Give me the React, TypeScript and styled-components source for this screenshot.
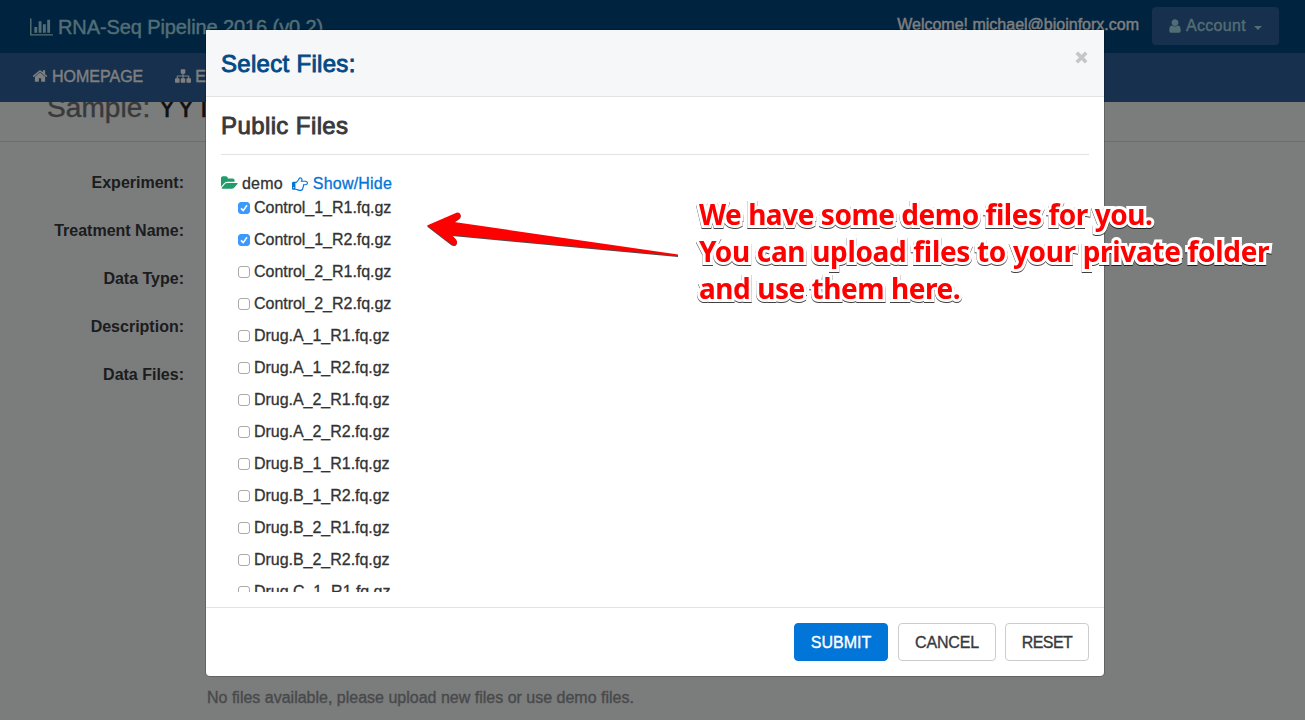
import React from "react";
import styled, { createGlobalStyle } from "styled-components";

const GlobalStyle = createGlobalStyle`
  * { box-sizing: border-box; }
  html, body { margin: 0; height: 100%; overflow: hidden; }
  body {
    background: #f7f8f9;
    color: #373a3c;
    font: 16px/24px "Liberation Sans", Arial, sans-serif;
  }
`;

const Page = styled.div`
  position: relative;
  width: 1305px;
  height: 720px;
  overflow: hidden;
  display: flex;
  flex-direction: column;
`;

const TopBar = styled.header`
  height: 53px;
  flex: none;
  display: flex;
  align-items: center;
  background: #00467e;
  padding: 0 26px 0 30px;
`;

const Brand = styled.div`
  display: flex;
  align-items: center;
  gap: 5px;
  flex: 1;
  color: #a5dce8;
  font-size: 20px;
  letter-spacing: -0.1px;
  -webkit-text-stroke: 0.4px;
  white-space: nowrap;
`;

const Welcome = styled.span`
  color: #fff;
  margin: -4px 13px 0 0;
  -webkit-text-stroke: 0.35px;
`;

const AccountButton = styled.button`
  width: 127px;
  height: 38px;
  margin-bottom: 1px;
  display: flex;
  align-items: center;
  border: 0;
  border-radius: 4px;
  background: #2c609b;
  color: #a5dce8;
  font: inherit;
  letter-spacing: 0.3px;
  padding: 0 17px;
  gap: 5px;
  -webkit-text-stroke: 0.35px;
`;

const Caret = styled.i`
  border: 4px solid transparent;
  border-top-color: currentColor;
  border-bottom: 0;
  margin: 3px 0 0 3px;
`;

const NavBar = styled.nav`
  height: 49px;
  flex: none;
  display: flex;
  align-items: center;
  gap: 32px;
  padding: 0 0 2px 32px;
  background: #2c609b;
  color: #fff;
`;

const NavItem = styled.a`
  display: flex;
  align-items: center;
  gap: 4px;
  -webkit-text-stroke: 0.35px;
  svg { margin-top: -2px; }
`;

const TitleStrip = styled.div`
  height: 40px;
  flex: none;
  overflow: hidden;
  border-bottom: 1px solid #d9dadb;
  padding-left: 47px;
`;

const SampleTitle = styled.h1`
  margin: -11px 0 0;
  font-size: 28px;
  line-height: 34px;
  font-weight: 400;
  letter-spacing: 0.1px;
  color: #6f7376;
  -webkit-text-stroke: 0.4px;
  b { color: #222; font-weight: 400; }
`;

const Details = styled.dl`
  margin: 29px 0 0;
  width: 184px;
  flex: none;
  display: flex;
  flex-direction: column;
  gap: 24px;
`;

const Label = styled.dt`
  text-align: right;
  font-weight: 700;
  white-space: nowrap;
`;

const EmptyNote = styled.p`
  margin: auto 0 10px 207px;
  width: max-content;
  color: #909396;
  -webkit-text-stroke: 0.35px;
`;

const Backdrop = styled.div`
  position: absolute;
  inset: 0;
  background: rgba(0, 0, 0, 0.5);
  display: flex;
  align-items: flex-start;
  padding: 30px 0 0 206px;
`;

const Dialog = styled.section`
  width: 898px;
  height: 646px;
  display: flex;
  flex-direction: column;
  background: #fff;
  border-radius: 0 0 4px 4px;
  box-shadow: 0 0 0 1px rgba(0, 0, 0, 0.2);
`;

const DialogHeader = styled.header`
  height: 67px;
  flex: none;
  display: flex;
  justify-content: space-between;
  align-items: center;
  padding: 0 16px 0 15px;
  background: #f5f7f9;
  border-bottom: 1px solid #e2e3e4;
`;

const DialogTitle = styled.h4`
  margin: 0;
  padding-top: 2px;
  font-size: 24px;
  font-weight: 400;
  letter-spacing: 0.3px;
  color: #034985;
  -webkit-text-stroke: 0.9px;
`;

const CloseIcon = styled.svg`
  margin-bottom: 11px;
  stroke: #c4c6c7;
  stroke-width: 3.6;
`;

const DialogBody = styled.div`
  flex: 1;
  min-height: 0;
  padding: 14px 15px 15px;
  display: flex;
  flex-direction: column;
`;

const SectionTitle = styled.h4`
  margin: 0 0 14px;
  padding-bottom: 13px;
  border-bottom: 1px solid #e2e3e4;
  font-size: 24px;
  line-height: 30px;
  font-weight: 400;
  letter-spacing: 0.4px;
  -webkit-text-stroke: 0.9px;
`;

const FolderRow = styled.div`
  display: flex;
  align-items: center;
  height: 25px;
  padding-top: 5px;
  letter-spacing: 0.2px;
  color: #333;
  -webkit-text-stroke: 0.3px;
  svg { margin: -2px 4px 0 0; }
`;

const Toggle = styled.a`
  display: flex;
  align-items: center;
  margin-left: 9px;
  color: #0275d8;
  svg { margin-right: 5px; }
`;

const FileList = styled.ul`
  list-style: none;
  margin: 0;
  padding: 2px 0 0 17px;
  flex: 1;
  min-height: 0;
  overflow: hidden;
`;

const FileRow = styled.li`
  height: 32px;
  display: flex;
  align-items: flex-start;
  gap: 4px;
  line-height: 24px;
  letter-spacing: -0.03px;
  color: #333;
  -webkit-text-stroke: 0.3px;
`;

const Box = styled.span<{ $on: boolean }>`
  width: 12px;
  height: 12px;
  margin-top: 6px;
  border-radius: 3px;
  border: 1px solid ${(p) => (p.$on ? "#3b99fc" : "#a9a9a9")};
  background: ${(p) => (p.$on ? "#3b99fc" : "#fff")};
  display: flex;
  align-items: center;
  justify-content: center;
`;

const DialogFooter = styled.footer`
  height: 69px;
  flex: none;
  display: flex;
  justify-content: flex-end;
  align-items: center;
  padding: 0 15px;
  border-top: 1px solid #e2e3e4;
`;

const Button = styled.button<{ $w: number; $ls?: number; $gap?: number; $primary?: boolean }>`
  width: ${(p) => p.$w}px;
  height: 38px;
  margin-left: ${(p) => p.$gap ?? 0}px;
  padding: 2px 0 0;
  font: inherit;
  letter-spacing: ${(p) => p.$ls ?? 0}px;
  border-radius: 4px;
  border: 1px solid ${(p) => (p.$primary ? "#0275d8" : "#ccc")};
  background: ${(p) => (p.$primary ? "#0275d8" : "#fff")};
  color: ${(p) => (p.$primary ? "#fff" : "#373a3c")};
  -webkit-text-stroke: 0.35px;
`;

const Annotation = styled.p`
  position: absolute;
  left: 699px;
  top: 196px;
  margin: 0;
  font: 700 28px/37px "Noto Sans", "Open Sans", sans-serif;
  color: #f00;
  white-space: nowrap;
  -webkit-text-stroke: 6px #fff;
  paint-order: stroke fill;
  filter: drop-shadow(0 1px 0.7px rgba(0, 0, 0, 0.75));
`;

const Line = styled.span<{ $ls: number }>`
  display: block;
  letter-spacing: ${(p) => p.$ls}px;
`;

const Arrow = styled.svg`
  position: absolute;
  left: 420px;
  top: 205px;
  filter: drop-shadow(0 1px 0.6px rgba(0, 0, 0, 0.7));
`;

const glyphs = {
  chart: {
    box: "0 0 2048 1792",
    d: "M640 896v512h-256v-512h256zm384-512v1024h-256v-1024h256zm1024 1152v128h-2048v-1536h128v1408h1920zm-640-896v768h-256v-768h256zm384-384v1152h-256v-1152h256z",
  },
  home: {
    box: "64 0 1664 1792",
    d: "M1472 992v480q0 26-19 45t-45 19h-384v-384h-256v384h-384q-26 0-45-19t-19-45v-480q0-1 .5-3t.5-3l575-474 575 474q1 2 1 6zm223-69l-62 74q-8 9-21 11h-3q-13 0-21-7l-692-577-692 577q-12 8-24 7-13-2-21-11l-62-74q-8-10-7-23.5t11-21.5l719-599q32-26 76-26t76 26l244 204v-195q0-14 9-23t23-9h192q14 0 23 9t9 23v408l219 182q10 8 11 21.5t-7 23.5z",
  },
  sitemap: {
    box: "0 0 1792 1792",
    d: "M1792 1248v320q0 40-28 68t-68 28h-320q-40 0-68-28t-28-68v-320q0-40 28-68t68-28h96v-192h-512v192h96q40 0 68 28t28 68v320q0 40-28 68t-68 28h-320q-40 0-68-28t-28-68v-320q0-40 28-68t68-28h96v-192h-512v192h96q40 0 68 28t28 68v320q0 40-28 68t-68 28h-320q-40 0-68-28t-28-68v-320q0-40 28-68t68-28h96v-192q0-52 38-90t90-38h512v-192h-96q-40 0-68-28t-28-68v-320q0-40 28-68t68-28h320q40 0 68 28t28 68v320q0 40-28 68t-68 28h-96v192h512q52 0 90 38t38 90v192h96q40 0 68 28t28 68z",
  },
  user: {
    box: "256 0 1280 1792",
    d: "M1536 1399q0 109-62.5 187t-150.5 78h-854q-88 0-150.5-78t-62.5-187q0-85 8.5-160.5t31.5-152 58.5-131 94-89 134.5-34.5q131 128 313 128t313-128q76 0 134.5 34.5t94 89 58.5 131 31.5 152 8.5 160.5zm-256-887q0 159-112.5 271.5t-271.5 112.5-271.5-112.5-112.5-271.5 112.5-271.5 271.5-112.5 271.5 112.5 112.5 271.5z",
  },
  folder: {
    box: "0 0 1920 1792",
    d: "M1879 952q0 31-31 66l-336 396q-43 51-120.5 86.5t-143.5 35.5h-1088q-34 0-60.5-13t-26.5-43q0-31 31-66l336-396q43-51 120.5-86.5t143.5-35.5h1088q34 0 60.5 13t26.5 43zm-343-344v160h-832q-94 0-197 47.5t-164 119.5l-337 396-5 6q0-4-.5-12.5t-.5-12.5v-960q0-92 66-158t158-66h320q92 0 158 66t66 158v32h544q92 0 158 66t66 158z",
  },
  hand: {
    box: "0 0 1792 1792",
    d: "M256 1408q0-26-19-45t-45-19-45 19-19 45 19 45 45 19 45-19 19-45zm1408-512q0-51-39-89.5t-89-38.5h-576q0-20 15-48.5t33-55 33-68 15-84.5q0-67-44.5-97.5t-115.5-30.5q-24 0-90 139-24 44-37 65-40 64-112 145-71 81-101 106-69 57-140 57h-32v640h32q72 0 167 32t193.5 64 179.5 32q189 0 189-167 0-26-5-56 30-16 47.5-52.5t17.5-73.5-18-69q53-50 53-119 0-25-10-55.5t-25-47.5h331q52 0 90-38t38-90zm128-1q0 105-75.5 181t-180.5 76h-169q-4 62-37 119 3 21 3 43 0 101-60 178 1 139-85 219.5t-227 80.5q-133 0-322-69-164-59-223-59h-288q-53 0-90.5-37.5t-37.5-90.5v-640q0-53 37.5-90.5t90.5-37.5h288q10 0 21.5-4.5t23.5-14 22.5-18 24-22.5 20.5-21.5 19-21.5 14-17q65-74 100-129 13-21 33-62t37-72 40.5-63 55-49.5 69.5-17.5q125 0 206.5 67t81.5 189q0 68-22 128h374q104 0 180 76t76 179z",
  },
};

function Glyph({ name, w, h, color = "currentColor" }: { name: keyof typeof glyphs; w: number; h: number; color?: string }) {
  return (
    <svg width={w} height={h} viewBox={glyphs[name].box} fill={color} stroke="none">
      <path d={glyphs[name].d} />
    </svg>
  );
}

const files = [
  "Control_1_R1", "Control_1_R2", "Control_2_R1", "Control_2_R2",
  "Drug.A_1_R1", "Drug.A_1_R2", "Drug.A_2_R1", "Drug.A_2_R2",
  "Drug.B_1_R1", "Drug.B_1_R2", "Drug.B_2_R1", "Drug.B_2_R2",
  "Drug.C_1_R1",
];

export default function App() {
  return (
    <>
      <GlobalStyle />
      <Page>
        <TopBar>
          <Brand>
            <Glyph name="chart" w={23} h={20} />
            RNA-Seq Pipeline 2016 (v0.2)
          </Brand>
          <Welcome>Welcome! michael@bioinforx.com</Welcome>
          <AccountButton>
            <Glyph name="user" w={12} h={16} />
            Account
            <Caret />
          </AccountButton>
        </TopBar>
        <NavBar>
          <NavItem><Glyph name="home" w={16} h={16} />HOMEPAGE</NavItem>
          <NavItem><Glyph name="sitemap" w={16} h={16} />EXPERIMENTS</NavItem>
        </NavBar>
        <TitleStrip>
          <SampleTitle>Sample: <b>YYT</b></SampleTitle>
        </TitleStrip>
        <Details>
          <Label>Experiment:</Label>
          <Label>Treatment Name:</Label>
          <Label>Data Type:</Label>
          <Label>Description:</Label>
          <Label>Data Files:</Label>
        </Details>
        <EmptyNote>No files available, please upload new files or use demo files.</EmptyNote>

        <Backdrop>
          <Dialog>
            <DialogHeader>
              <DialogTitle>Select Files:</DialogTitle>
              <CloseIcon width="13" height="13" viewBox="0 0 13 13">
                <path d="M1.8 1.8l9.4 9.4M11.2 1.8l-9.4 9.4" />
              </CloseIcon>
            </DialogHeader>
            <DialogBody>
              <SectionTitle>Public Files</SectionTitle>
              <FolderRow>
                <Glyph name="folder" w={17} h={16} color="#1f9d6b" />
                demo
                <Toggle><Glyph name="hand" w={16} h={16} />Show/Hide</Toggle>
              </FolderRow>
              <FileList>
                {files.map((f, i) => (
                  <FileRow key={f}>
                    <Box $on={i < 2}>
                      {i < 2 && (
                        <svg width="10" height="10" viewBox="0 0 10 10" fill="none" stroke="#fff" strokeWidth="1.6">
                          <path d="M2 5.4l2.2 2.2L8 2.2" />
                        </svg>
                      )}
                    </Box>
                    {f}.fq.gz
                  </FileRow>
                ))}
              </FileList>
            </DialogBody>
            <DialogFooter>
              <Button $w={94} $primary>SUBMIT</Button>
              <Button $w={98} $gap={10} $ls={-0.15}>CANCEL</Button>
              <Button $w={84} $gap={9} $ls={-0.6}>RESET</Button>
            </DialogFooter>
          </Dialog>
        </Backdrop>

        <Arrow width="270" height="60" viewBox="420 205 270 60" fill="#f00">
          <path d="M427 225.5L456.5 212.7Q459.5 212 460.6 214.8Q461.2 217.4 459 218.6L454 222L678 254.6L678 256L452 235L456 239.4Q458 242 456 244.4Q453.5 246 451 244Z" />
        </Arrow>
        <Annotation>
          <Line $ls={-0.46}>We have some demo files for you.</Line>
          <Line $ls={-0.33}>You can upload files to your private folder</Line>
          <Line $ls={-0.45}>and use them here.</Line>
        </Annotation>
      </Page>
    </>
  );
}
